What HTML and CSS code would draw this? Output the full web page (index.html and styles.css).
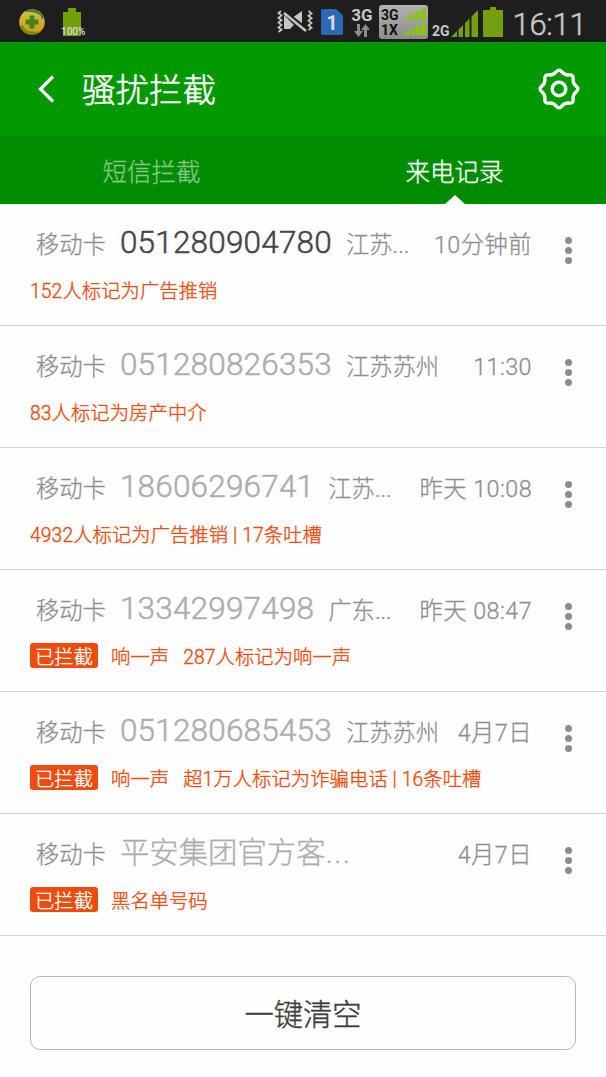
FILE: index.html
```html
<!DOCTYPE html>
<html lang="zh-CN">
<head>
<meta charset="utf-8">
<title>骚扰拦截</title>
<link rel="stylesheet" href="styles.css">
</head>
<body>
<div class="screen">
  <div class="status">
    <svg class="app-icon" width="26" height="26" viewBox="0 0 26 26">
      <defs><linearGradient id="gold" x1="0" y1="0" x2="0" y2="1"><stop offset="0" stop-color="#d3bd50"/><stop offset="1" stop-color="#cf9c08"/></linearGradient></defs>
      <circle cx="13" cy="13" r="12.8" fill="url(#gold)"/>
      <path d="M5 3A13 13 0 0 1 25 9Q22 12 22 7Q16 2 5 3Z" fill="#477c28"/>
      <path d="M1 17Q4 15 5 19Q9 24 21 22.500A13 13 0 0 1 1 17Z" fill="#678d21"/>
      <path d="M11 7h4v4h4v4h-4v4h-4v-4H7v-4h4z" fill="#44821f" stroke="#44821f" stroke-linejoin="round"/>
    </svg>
    <div class="charge">
      <svg width="18" height="28" viewBox="0 0 18 28"><path d="M5 0h8v4h5v24H0V4h5z" fill="#72a008"/></svg>
      <span class="charge-text">100%</span>
    </div>
    <svg class="mute" width="36" height="24" viewBox="0 0 36 24" fill="none" stroke="#c4c4c4" stroke-width="1.800">
      <path d="M4 1L1.500 3l3 2.400-3 2.400 3 2.400-3 2.400 3 2.400-3 2.400 3 2.400-3 2.200M31.500 1l3 2.400-3 2.400 3 2.400-3 2.400 3 2.400-3 2.400 3 2.400-3 2.200"/>
      <path d="M7 5V19h6l4-4zM15 8l10-7v15z" fill="#c4c4c4" stroke="none"/>
      <path d="M9 2.500L31 19.500" stroke="#1e1e1e" stroke-width="2.500"/>
      <path d="M7 3L29 21" stroke-width="2.500"/>
    </svg>
    <div class="sim"><svg width="22" height="26" viewBox="0 0 22 26"><path d="M1 0h14l7 6.500V25l-1 1H1l-1-1V1z" fill="#2c69b4"/></svg><span class="sim-text">1</span></div>
    <div class="net">
      <span>3G</span>
      <svg width="16" height="13" viewBox="0 0 16 13" fill="#8c8c8c"><path d="M3 0h3v7h3l-4.500 6L0 7h3zM10 13V6H7l4.500-6L16 6h-3v7z"/></svg>
    </div>
    <div class="dual">
      <div class="dual-row"><span>3G</span><svg width="25" height="13" viewBox="0 0 25 13" fill="#88c616"><path d="M0 13l4-2v2zM5 13v-3l4-2v5zM10 13V7l4-2v8zM15 13V5l4-2v10zM20 13V2l5-2v13z"/></svg></div>
      <div class="dual-row"><span>1X</span><svg width="25" height="13" viewBox="0 0 25 13" fill="#88c616"><path d="M0 13l4-2v2zM5 13v-3l4-2v5zM10 13V7l4-2v8zM15 13V5l4-2v10zM20 13V2l5-2v13z"/></svg></div>
    </div>
    <span class="two-g">2G</span>
    <svg class="bars" width="27" height="27" viewBox="0 0 27 27" fill="#72a010"><path d="M0 27l6-6v6zM7.500 27v-7.500L12 15v12zM14 27V13l4.500-4.500V27zM20.500 27V6.500L27 0v27z"/></svg>
    <svg class="battery" width="20" height="30" viewBox="0 0 20 30"><path d="M7 0h6v3h7v27H0V3h7z" fill="#72a010"/></svg>
    <span class="clock">16:11</span>
  </div>
  <header class="header">
    <svg class="back" width="17" height="28" viewBox="0 0 17 28" fill="none" stroke="#fff" stroke-width="3.300"><path d="M15 1.500L2.500 14 15 26.500"/></svg>
    <h1 class="title">骚扰拦截</h1>
    <svg class="gear" width="42" height="42" viewBox="-21 -21 42 42" fill="none" stroke="#fff" stroke-width="3.400">
      <path d="M17.140-2.830Q20.600 0 17.140 2.830Q13.670 5.660 14.120 10.120Q14.570 14.570 10.120 14.120Q5.660 13.670 2.830 17.140Q0 20.600-2.830 17.140Q-5.660 13.670-10.120 14.120Q-14.570 14.570-14.120 10.120Q-13.670 5.660-17.140 2.830Q-20.600 0-17.140-2.830Q-13.670-5.660-14.120-10.120Q-14.570-14.570-10.120-14.120Q-5.660-13.670-2.830-17.140Q0-20.600 2.830-17.140Q5.660-13.670 10.120-14.120Q14.570-14.570 14.120-10.120Q13.670-5.660 17.140-2.830Z"/>
      <circle r="6.800"/>
    </svg>
  </header>
  <nav class="tabs">
    <div class="tab">短信拦截</div>
    <div class="tab active">来电记录</div>
  </nav>
  <main class="list">
    <article class="row unread">
      <div class="info">
        <div class="top"><span class="card">移动卡</span><span class="number">051280904780</span><span class="place">江苏...</span><span class="time">10分钟前</span></div>
        <div class="sub"><span>152人标记为广告推销</span></div>
      </div>
      <div class="more"><i></i><i></i><i></i></div>
    </article>
    <article class="row">
      <div class="info">
        <div class="top"><span class="card">移动卡</span><span class="number">051280826353</span><span class="place">江苏苏州</span><span class="time">11:30</span></div>
        <div class="sub"><span>83人标记为房产中介</span></div>
      </div>
      <div class="more"><i></i><i></i><i></i></div>
    </article>
    <article class="row">
      <div class="info">
        <div class="top"><span class="card">移动卡</span><span class="number">18606296741</span><span class="place">江苏...</span><span class="time">昨天 10:08</span></div>
        <div class="sub"><span>4932人标记为广告推销 | 17条吐槽</span></div>
      </div>
      <div class="more"><i></i><i></i><i></i></div>
    </article>
    <article class="row">
      <div class="info">
        <div class="top"><span class="card">移动卡</span><span class="number">13342997498</span><span class="place">广东...</span><span class="time">昨天 08:47</span></div>
        <div class="sub"><span class="badge">已拦截</span><span>响一声</span><span>287人标记为响一声</span></div>
      </div>
      <div class="more"><i></i><i></i><i></i></div>
    </article>
    <article class="row">
      <div class="info">
        <div class="top"><span class="card">移动卡</span><span class="number">051280685453</span><span class="place">江苏苏州</span><span class="time">4月7日</span></div>
        <div class="sub"><span class="badge">已拦截</span><span>响一声</span><span>超1万人标记为诈骗电话 | 16条吐槽</span></div>
      </div>
      <div class="more"><i></i><i></i><i></i></div>
    </article>
    <article class="row">
      <div class="info">
        <div class="top"><span class="card">移动卡</span><span class="number name">平安集团官方客<span class="dots">...</span></span><span class="time">4月7日</span></div>
        <div class="sub"><span class="badge">已拦截</span><span>黑名单号码</span></div>
      </div>
      <div class="more"><i></i><i></i><i></i></div>
    </article>
  </main>
  <footer class="footer"><button class="clear">一键清空</button></footer>
</div>
</body>
</html>
```
FILE: styles.css
```css
* { box-sizing: border-box; }
body {
  margin: 0;
  background: #fefefe;
  font-family: Roboto, "Noto Sans CJK SC", sans-serif;
  font-weight: 300;
}
svg { display: block; flex: none; }
.screen {
  width: 606px;
  height: 1077px;
  overflow: hidden;
  display: flex;
  flex-direction: column;
}
.status {
  height: 42px;
  flex: none;
  display: flex;
  align-items: flex-start;
  padding-left: 19px;
  background: #1e1e1e;
  color: #c8c8c8;
  white-space: nowrap;
}
.app-icon { margin-top: 9px; }
.charge { position: relative; width: 24px; margin: 8px 0 0 15px; padding-left: 3px; }
.charge-text {
  position: absolute;
  left: 1px;
  top: 19px;
  font-size: 10px;
  line-height: 10px;
  font-weight: 500;
  color: #ddd;
}
.mute { margin: 10px 0 0 193px; }
.sim { position: relative; margin: 9px 0 0 8px; }
.sim-text {
  position: absolute;
  inset: 0;
  text-align: center;
  font-size: 20px;
  line-height: 29px;
  font-weight: 700;
  color: #d8dce2;
}
.net {
  display: flex;
  flex-direction: column;
  align-items: center;
  gap: 1px;
  width: 22px;
  margin: 8px 0 0 8px;
  font-size: 17px;
  line-height: 15px;
  font-weight: 700;
}
.dual {
  width: 49px;
  height: 34px;
  margin: 5px 0 0 6px;
  padding: 2px;
  border-radius: 3px;
  background: linear-gradient(#b2b2b2, #8c8c8c);
  color: #111;
  font-size: 14px;
  font-weight: 700;
}
.dual-row { height: 15px; line-height: 17px; display: flex; justify-content: space-between; }
.two-g { margin: 23px 0 0 4px; font-size: 14px; line-height: 16px; font-weight: 700; }
.bars { margin: 10px 0 0 1px; }
.battery { margin: 7px 0 0 5px; }
.clock {
  margin: 6px 0 0 10px;
  font-size: 31px;
  line-height: 38px;
  letter-spacing: -0.300px;
  -webkit-text-stroke: 0.500px;
}
.header {
  height: 94px;
  flex: none;
  display: flex;
  align-items: center;
  padding: 0 26px 0 38px;
  background: #009900;
  color: #fff;
}
.title {
  margin: 0 auto 0 27px;
  padding-top: 3px;
  font-size: 33.500px;
  font-weight: 300;
  line-height: 40px;
  -webkit-text-stroke: 0.500px;
}
.tabs {
  height: 68px;
  flex: none;
  display: flex;
  background: #008c00;
  color: #84c884;
  -webkit-text-stroke: 0.300px;
}
.tab {
  flex: 1;
  text-align: center;
  font-size: 24.500px;
  line-height: 73px;
  position: relative;
}
.active { color: #fff; }
.active::after {
  content: "";
  position: absolute;
  left: 50%;
  bottom: 0;
  transform: translateX(-50%);
  border: solid transparent;
  border-width: 0 10px 9px;
  border-bottom-color: #fefefe;
}
.row {
  height: 122px;
  display: flex;
  border-bottom: 1px solid #d2d2d2;
}
.info { width: 532px; padding: 19px 0 0 30px; }
.top {
  display: flex;
  align-items: baseline;
  height: 40px;
  padding-left: 6px;
  font-size: 23.300px;
  line-height: 40px;
  color: #8e8e8e;
  white-space: nowrap;
  -webkit-text-stroke: 0.300px;
}
.number {
  margin-left: 14px;
  font-size: 31.500px;
  letter-spacing: 0.200px;
  color: #adadad;
  -webkit-text-stroke: 0.500px;
}
.name { font-size: 29.400px; letter-spacing: 0; -webkit-text-stroke: 0.300px; }
.dots { letter-spacing: 1.600px; }
.unread .number { color: #444; }
.place { margin-left: 14px; }
.time { margin-left: auto; letter-spacing: 0.450px; }
.sub {
  display: flex;
  align-items: center;
  gap: 14px;
  height: 24px;
  margin-top: 17px;
  font-size: 19.300px;
  letter-spacing: 0.100px;
  line-height: 24px;
  color: #f04a0c;
  white-space: nowrap;
  -webkit-text-stroke: 0.350px;
}
.badge {
  width: 68px;
  height: 25px;
  margin: -5px -1px 0 0;
  border-radius: 3px;
  background: #f04a0c;
  color: #fff;
  text-align: center;
  line-height: 30px;
}
.more {
  display: flex;
  flex-direction: column;
  gap: 3px;
  padding: 33px 0 0 33px;
}
.more i { width: 7px; height: 7px; border-radius: 50%; background: #8c8c8c; }
.footer { padding: 40px 30px 0; }
.clear {
  display: block;
  width: 100%;
  height: 74px;
  padding: 2px 0 0;
  border: 1px solid #b8b8b8;
  border-radius: 10px;
  background: none;
  font: 300 29.300px/72px Roboto, "Noto Sans CJK SC", sans-serif;
  color: #3c3c3c;
  -webkit-text-stroke: 0.400px;
}
```
